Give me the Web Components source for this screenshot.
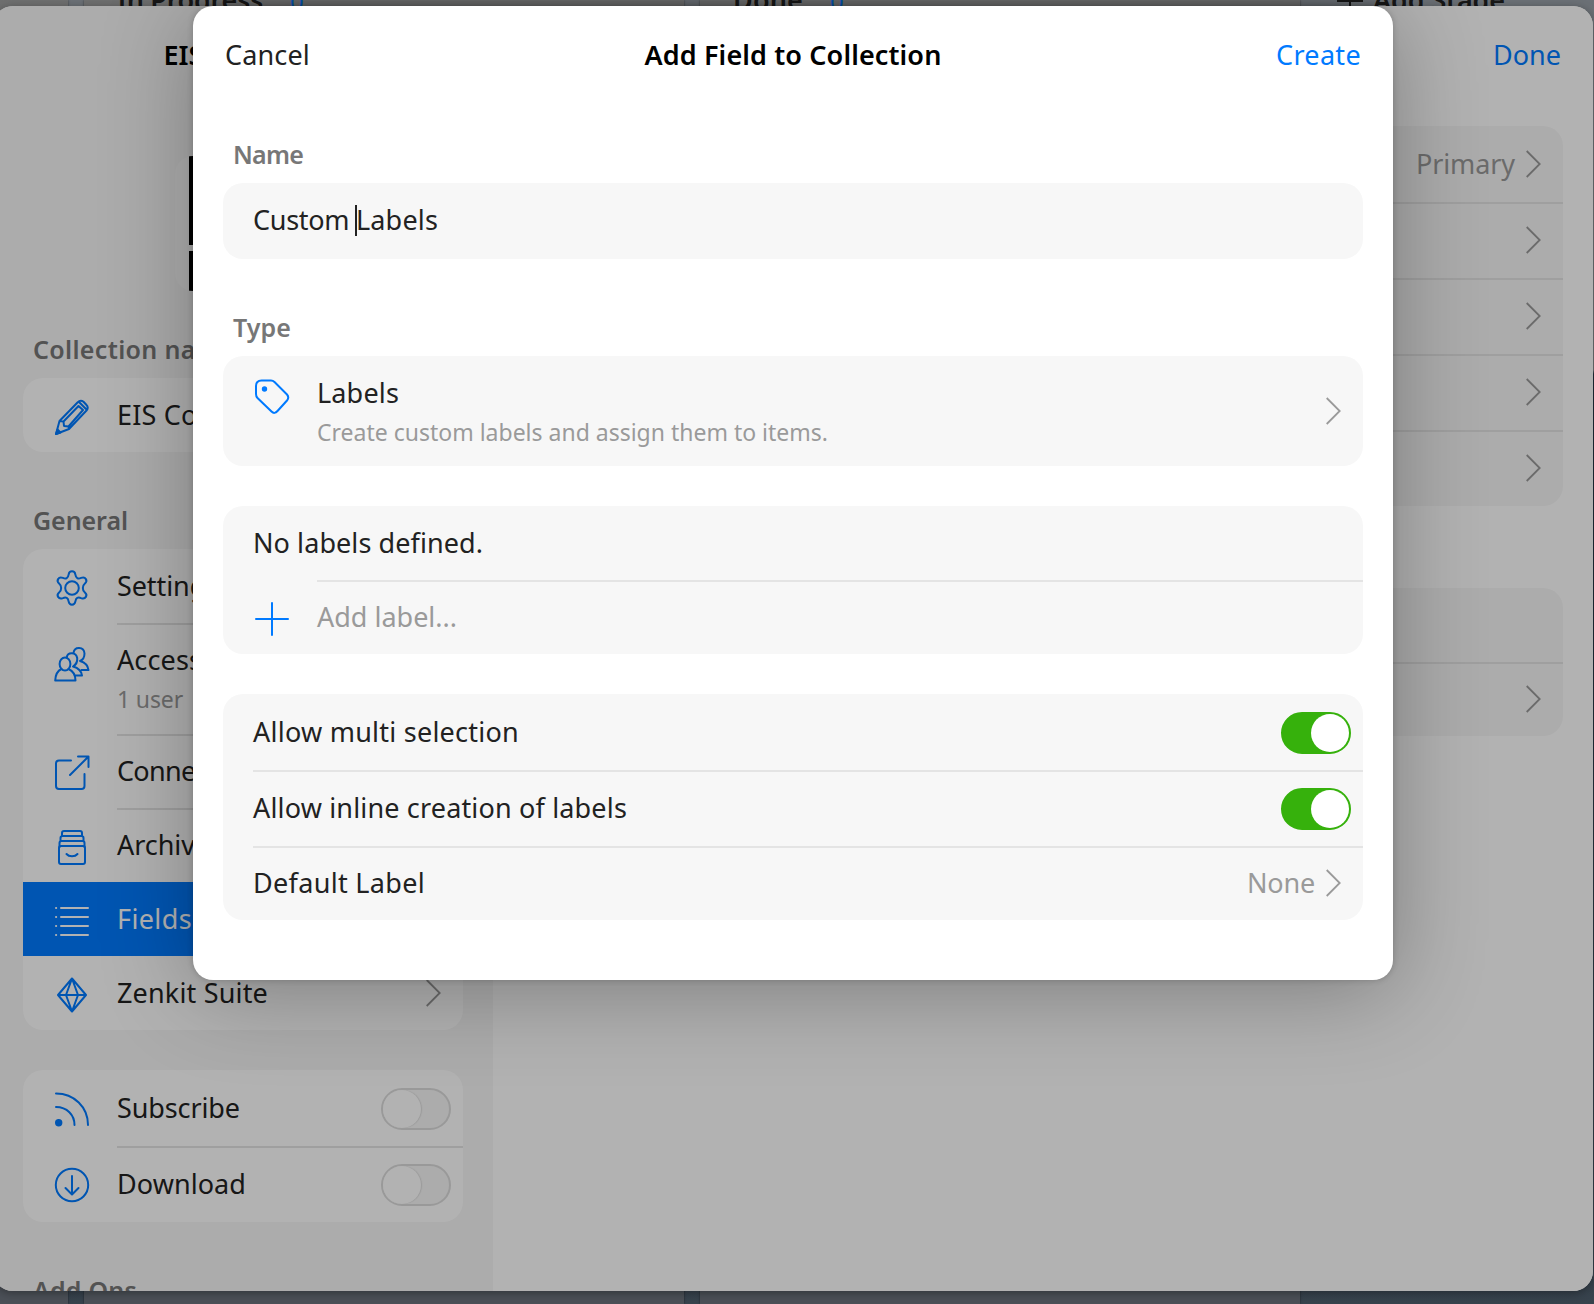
<!DOCTYPE html>
<html lang="en">
<head>
<meta charset="utf-8">
<title>Add Field to Collection</title>
<style>
html,body{margin:0;height:100%;overflow:hidden}
body{font-family:"Noto Sans","Open Sans",sans-serif;font-size:27px;color:#222;background:#536072}
</style>
</head>
<body>
<z-app></z-app>

<template id="app">
<style>
:host{display:block;position:relative;width:1594px;height:1304px;overflow:hidden}
.layer{position:absolute;inset:0}
.settings{position:absolute;left:-7px;top:6px}
.dim{position:absolute;inset:0;background:rgba(0,0,0,.3)}
.modal{position:absolute;left:193px;top:6px}
</style>
<z-board class="layer"></z-board>
<z-settings class="settings"></z-settings>
<div class="dim"></div>
<z-modal class="modal"></z-modal>
</template>

<template id="board">
<style>
:host{display:flex;gap:16px;background:linear-gradient(#9aa1a9 0,#a0a2a5 370px,#2c3f50 374px,#2c3f50 640px,#50606f 1304px)}
.col{flex:none;width:600px;height:100%;box-sizing:border-box;background:linear-gradient(#9e9f9f,#a2a2a2 20px,#6c737d 1280px);box-shadow:0 0 2px rgba(0,0,0,.5)}
.first{width:68px}
.last{background:none;box-shadow:none;flex:1;width:auto}
.head{display:flex;align-items:center;height:38px;margin-top:-20px;padding-left:33px;font-weight:600;color:#222}
.n{color:#007aff;font-weight:400;margin-left:27px;font-size:24px;padding-top:3px}
.last .head{padding-left:20px;gap:9px}
svg{display:block;margin-top:3px}
</style>
<div class="col first"></div>
<div class="col"><div class="head"><z-text w="146">In Progress</z-text><span class="n">0</span></div></div>
<div class="col"><div class="head"><z-text w="70">Done</z-text><span class="n">0</span></div></div>
<div class="col last"><div class="head"><svg width="28" height="28" viewBox="0 0 28 28" stroke="#222" stroke-width="2"><path d="M1 14H27M14 1V27"/></svg><z-text w="132">Add Stage</z-text></div></div>
</template>

<template id="settings">
<style>
:host{display:flex;width:1600px;height:1285px;border-radius:20px;overflow:hidden;background:#fff;box-shadow:0 2px 10px rgba(0,0,0,.35)}
.side{width:500px;flex:none;background:#f6f6f6;--card:#fff;display:flex;flex-direction:column;overflow:hidden}
.main{flex:1;background:#fff}
.bar{height:96px;padding-bottom:2px;flex:none;display:flex;align-items:center;justify-content:center}
.title{font-weight:600;color:#000}
.title span{width:159px}
.main .bar{justify-content:flex-end;padding-right:32px;color:#007aff;margin-bottom:22px}
.pic{flex:none;width:136px;height:135px;border-radius:18px;background:#fbfbfb;margin:52px auto 0;overflow:hidden;display:flex;flex-direction:column;gap:6px;align-items:center}
.pic i{width:108px;background:#000;height:89px}
.pic i+i{height:40px}
.side z-card{margin:0 30px;flex:none}
.side z-heading{padding-left:40px}
.side z-heading.first{margin-top:36px}
.main z-card{margin:0 30px 82px}
</style>
<div class="side">
<div class="bar title"><span>EIS</span></div>
<div class="pic"><i></i><i></i></div>
<z-heading class="first"><z-text w="202">Collection name</z-text></z-heading>
<z-card><z-row icon="pencil" style="--iy:21px"><z-text w="174">EIS Collection</z-text></z-row></z-card>
<z-heading style="margin-top:46px"><z-text w="95">General</z-text></z-heading>
<z-card>
<z-row icon="gear" style="--iy:21px"><z-text w="102">Settings</z-text></z-row>
<z-row icon="people" line style="--h:111px;--iy:23px;--up:2px"><z-text w="85">Access</z-text><z-text slot="sub" w="66">1 user</z-text></z-row>
<z-row icon="share" line style="--iy:21px"><z-text w="150">Connections</z-text></z-row>
<z-row icon="archive" line style="--h:74px;--iy:21px"><z-text w="93">Archive</z-text></z-row>
<z-row icon="list" active style="--h:74px;--iy:21px"><z-text w="75">Fields</z-text></z-row>
<z-row icon="gem" chevron style="--iy:21px"><z-text w="151">Zenkit Suite</z-text></z-row>
</z-card>
<z-card style="margin-top:40px;--h:76px;--iy:21px">
<z-row icon="rss"><z-text w="123">Subscribe</z-text><z-toggle slot="end"></z-toggle></z-row>
<z-row icon="down" line><z-text w="129">Download</z-text><z-toggle slot="end"></z-toggle></z-row>
</z-card>
<z-heading style="margin-top:46px"><z-text w="104">Add Ons</z-text></z-heading>
</div>
<div class="main">
<div class="bar"><z-text w="68">Done</z-text></div>
<z-card style="--h:76px">
<z-row chevron><z-text slot="end" w="99">Primary</z-text></z-row>
<z-row chevron line></z-row><z-row chevron line></z-row><z-row chevron line></z-row><z-row chevron line></z-row>
</z-card>
<z-card><z-row></z-row><z-row chevron line></z-row></z-card>
</div>
</template>

<template id="modal">
<style>
:host{display:flex;flex-direction:column;box-sizing:border-box;width:1200px;height:974px;padding:0 30px;border-radius:20px;background:#fff;box-shadow:0 0 6px rgba(0,0,0,.2),0 10px 92px rgba(0,0,0,.3)}
.bar{height:96px;display:grid;grid-template-columns:1fr auto 1fr;align-items:center;padding:0 2px 2px}
.title{font-weight:600;color:#000}
.create{color:#007aff;justify-self:end}
z-heading{padding-left:10px}
z-card+z-card{margin-top:40px}
.caret{display:inline-block;width:2px;height:31px;background:#222;margin:0 -1px}
.field{display:flex;align-items:center;margin-top:-2px}
</style>
<div class="bar"><z-text w="85">Cancel</z-text><z-text class="title" w="297">Add Field to Collection</z-text><z-text class="create" w="85">Create</z-text></div>
<z-heading style="margin-top:28px"><z-text w="70">Name</z-text></z-heading>
<z-card style="--h:76px"><z-row><span class="field"><z-text w="103">Custom&nbsp;</z-text><span class="caret"></span><z-text w="82">Labels</z-text></span></z-row></z-card>
<z-heading style="margin-top:46px"><z-text w="58">Type</z-text></z-heading>
<z-card><z-row icon="tag" chevron style="--h:110px;--iy:23px"><z-text w="82">Labels</z-text><z-text slot="sub" w="511">Create custom labels and assign them to items.</z-text></z-row></z-card>
<z-card><z-row style="--h:74px"><z-text w="230">No labels defined.</z-text></z-row><z-row icon="plus" line style="--iy:21px;--fg:#9a9a9a"><z-text w="140">Add label...</z-text></z-row></z-card>
<z-card style="--h:76px">
<z-row><z-text w="266">Allow multi selection</z-text><z-toggle on slot="end"></z-toggle></z-row>
<z-row line><z-text w="374">Allow inline creation of labels</z-text><z-toggle on slot="end"></z-toggle></z-row>
<z-row chevron line style="--h:74px"><z-text w="172">Default Label</z-text><z-text slot="end" w="68">None</z-text></z-row>
</z-card>
</template>

<template id="row">
<style>
:host{display:flex;height:var(--h,74px);color:var(--fg,#222)}
:host([active]){background:#007aff;color:#fff}
.icon{flex:none;width:30px;box-sizing:border-box}
:host([icon]) .icon{width:94px;padding:var(--iy,22px) 0 0 31px}
.icon svg{display:block;width:36px;height:36px;fill:none;stroke:#007aff;stroke-width:2;stroke-linecap:round;stroke-linejoin:round}
:host([active]) .icon svg{stroke:#fff}
.body{flex:1;display:flex;align-items:center}
:host([line]) .body{background:linear-gradient(#e4e4e4,#e4e4e4) 0 0/100% 2px no-repeat}
.copy{flex:1;display:flex;flex-direction:column;line-height:38px}
.copy:has(.sub.has){padding-top:var(--up,4px)}
.sub{font-size:23px;line-height:40px;color:#9a9a9a}
.sub:not(.has){display:none}
.end{display:flex;align-items:center;color:#9a9a9a;padding-right:12px}
.end slot{display:block;line-height:37px;padding-bottom:1px}
::slotted(z-toggle){margin-top:2px}
.chev{display:none;width:15px;height:28px;margin:0 10px 0 11px;fill:none;stroke:#9a9a9a;stroke-width:1.8}
:host([chevron]) .chev{display:block}
</style>
<div class="icon"></div>
<div class="body"><div class="copy"><slot></slot><div class="sub"><slot name="sub"></slot></div></div>
<div class="end"><slot name="end"></slot><svg class="chev" viewBox="0 0 15 28"><path d="M.7 1L13.7 14L.7 27"/></svg></div></div>
</template>

<script>
const ICONS={
pencil:'<path d="M2 35L5.500 22L23.500 3.500Q26.500 .5 29.500 2.800L32.300 5.800Q35 8.500 32.500 11.500L15 30ZM5.500 22L9.500 22.500L10 27L14.500 27.500L15 30M9.500 22.500L24.500 7L29 11L14.500 27.500M25 3L32.500 10.500"/><path d="M2 35L3.500 30.500L6.500 33.500Z" fill="#007aff"/>',
gear:'<circle cx="18" cy="18" r="6.8"/><path d="M14.600 4.600C15.300 .2 20.700 .2 21.400 4.600C21.900 8.200 24 9.300 27.100 7.900C31.500 6.200 34.300 10.900 30.700 13.800C28.200 15.900 28.200 20.100 30.700 22.200C34.300 25.100 31.500 29.800 27.100 28.100C24 26.700 21.900 27.800 21.400 31.400C20.700 35.800 15.300 35.800 14.600 31.400C14.100 27.800 12 26.700 8.900 28.100C4.500 29.800 1.700 25.100 5.300 22.200C7.800 20.100 7.800 15.900 5.300 13.800C1.700 10.900 4.500 6.200 8.900 7.900C12 9.300 14.100 8.200 14.600 4.600Z"/>',
people:'<ellipse cx="11" cy="18" rx="5.400" ry="6.400"/><path d="M7.500 23C3 25 1.500 29 1.200 34.500H21.500C21.500 29 19 25 14.500 23M12.800 11C13.500 6 22 5.500 23.200 12C23.600 16 21.500 19 19 20.500C24 22 27.500 25 28 29.500H21M19.500 7C20.500 .2 30 .5 30.500 7.500C30.500 11 28.500 14 26 15C31 16.500 34 19.500 34.500 24H27.500"/>',
share:'<path d="M17 5.500H5Q2 5.500 2 8.500V31Q2 34 5 34H27.500Q30.500 34 30.500 31V19M16 20L34 2M24 1.500H34.500V12"/>',
archive:'<rect x="5" y="17" width="26" height="18" rx="2"/><path d="M5.500 18V14Q5.500 12 7.500 12H28.500Q30.500 12 30.500 14V18M6.500 12V9Q6.500 7 8.500 7H27.500Q29.500 7 29.500 9V12M8 7V4Q8 2 10 2H26Q28 2 28 4V7M12.500 25C15 28 21 28 23.500 25"/>',
list:'<path d="M7 5H34M7 14H34M7 23H34M7 32H34M2 5H2.200M2 14H2.200M2 23H2.200M2 32H2.200"/>',
gem:'<path d="M18 1.500L32 18L18 34.500L4 18ZM4 18H32M18 1.500L12 18L18 34.500L24 18Z"/>',
rss:'<circle cx="4.700" cy="31.700" r="2.700" fill="#007aff"/><path d="M2 2.500C20 2.500 34 16 34 34M2 16C13 16 20.500 24 20.500 34"/>',
down:'<circle cx="18" cy="18" r="16.200"/><path d="M18 9V27M11.500 21L18 27.500L24.500 21"/>',
tag:'<path d="M2 7Q2 1.500 7.500 1.500H17Q19 1.500 20.500 3L33 15.500Q35.500 18.500 33 21.500L23.500 32Q20.500 35.500 17.500 32.500L3.500 19Q2 17.500 2 15Z"/><circle cx="10.500" cy="10" r="1.700" fill="#007aff"/>',
plus:'<path d="M2 18H34M18 2V34"/>'
};
const stamp=(el,id)=>{
  const root=el.attachShadow({mode:'open'});
  root.append(document.getElementById(id).content.cloneNode(true));
  return root;
};
/* Single-line text whose tracking is tuned to an intended advance width. */
customElements.define('z-text',class extends HTMLElement{
  constructor(){
    super();
    this.attachShadow({mode:'open'}).innerHTML='<style>:host{display:inline-block;white-space:nowrap;width:max-content}</style><span><slot></slot></span>';
  }
  connectedCallback(){requestAnimationFrame(()=>this.fit());this.fit()}
  fit(){
    const w=+this.getAttribute('w'),s=this.shadowRoot.querySelector('span');
    s.style.letterSpacing='0px';
    const n=s.getBoundingClientRect().width;
    if(w&&n)s.style.letterSpacing=(w-n)/this.textContent.length+'px';
  }
});
customElements.define('z-heading',class extends HTMLElement{
  constructor(){
    super();
    this.attachShadow({mode:'open'}).innerHTML='<style>:host{display:block;flex:none;height:51px;line-height:44px;font-size:25px;font-weight:600;color:#777}</style><slot></slot>';
  }
});
customElements.define('z-card',class extends HTMLElement{
  constructor(){
    super();
    this.attachShadow({mode:'open'}).innerHTML='<style>:host{display:block;border-radius:20px;overflow:hidden;background:var(--card,#f7f7f7)}</style><slot></slot>';
  }
});
customElements.define('z-toggle',class extends HTMLElement{
  constructor(){
    super();
    this.attachShadow({mode:'open'}).innerHTML='<style>:host{display:flex;box-sizing:border-box;width:70px;height:42px;padding:0;border:2px solid #dcdcdc;border-radius:21px;background:#f6f6f6}i{width:38px;height:38px;border-radius:50%;background:#fff;box-shadow:1px 0 1px #ddd}:host([on]){background:#36b10c;border-color:#36b10c;justify-content:flex-end}:host([on]) i{box-shadow:none}</style><i></i>';
  }
});
customElements.define('z-row',class extends HTMLElement{
  constructor(){
    super();
    const r=stamp(this,'row'),name=this.getAttribute('icon');
    if(name)r.querySelector('.icon').innerHTML='<svg viewBox="0 0 36 36">'+ICONS[name]+'</svg>';
    if(this.querySelector('[slot=sub]'))r.querySelector('.sub').classList.add('has');
  }
});
for(const id of['board','settings','modal','app'])
  customElements.define('z-'+id,class extends HTMLElement{constructor(){super();stamp(this,id)}});
</script>
</body>
</html>
